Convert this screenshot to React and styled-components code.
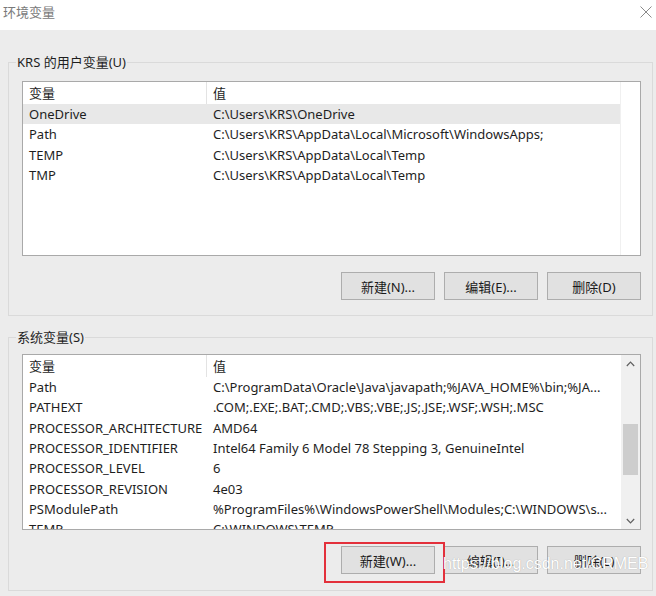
import React from "react";
import styled, { createGlobalStyle } from "styled-components";

const GlobalStyle = createGlobalStyle`
  html, body { margin: 0; padding: 0; }
  body {
    background: #ececec;
    font-family: "Noto Sans", "Noto Sans CJK SC", sans-serif;
  }
  * { box-sizing: border-box; }
`;

const Window = styled.div`
  position: relative;
  width: 656px;
  height: 596px;
  background: #ececec;
  overflow: hidden;
  display: flex;
  flex-direction: column;
`;

const TitleBar = styled.div`
  height: 30px;
  flex: none;
  background: #ffffff;
  display: flex;
  align-items: flex-start;
  justify-content: space-between;
  padding: 3px 4px 0 3px;
`;

const Title = styled.span`
  font-size: 13px;
  line-height: 18px;
  color: #7a7a7a;
`;

const CloseIcon = styled.svg`
  margin-top: 3px;
  width: 12px;
  height: 12px;
`;

const Group = styled.fieldset`
  margin: ${(p) => p.$top}px 3px 0 8px;
  border: 1px solid #dadada;
  padding: ${(p) => p.$padTop}px 11px ${(p) => p.$padBottom}px 13px;
  min-width: 0;
`;

const Legend = styled.legend`
  margin-left: -6px;
  padding: 0 1px;
  font-size: 13px;
  line-height: 18px;
  color: #1e1e1e;
`;

const List = styled.div`
  height: ${(p) => p.$height}px;
  background: #ffffff;
  border: 1px solid #a9a9a9;
  display: flex;
  overflow: hidden;
`;

const Table = styled.div`
  flex: 1;
  min-width: 0;
  display: flex;
  flex-direction: column;
`;

const Row = styled.div`
  flex: none;
  display: grid;
  grid-template-columns: 184px 1fr;
  height: ${(p) => (p.$header ? 22 : 20.33)}px;
  line-height: ${(p) => (p.$header ? 22 : 20.33)}px;
  background: ${(p) => (p.$selected ? "#e8e8e8" : "transparent")};
  font-size: 13px;
  color: #1e1e1e;
`;

const Cell = styled.div`
  padding-left: 6px;
  white-space: nowrap;
  overflow: hidden;
  border-right: ${(p) => (p.$divider ? "1px solid #e3e3e3" : "none")};
`;

const Spacer = styled.div`
  width: 20px;
  flex: none;
  border-left: 1px solid #f0f0f0;
`;

const ScrollBar = styled.div`
  width: 19px;
  flex: none;
  background: #f0f0f0;
  display: flex;
  flex-direction: column;
`;

const ArrowBtn = styled.div`
  height: 17px;
  flex: none;
  display: flex;
  align-items: center;
  justify-content: center;
`;

const Track = styled.div`
  flex: 1;
  padding: 0 2px;
`;

const Thumb = styled.div`
  margin-top: 52px;
  height: 51px;
  background: #cdcdcd;
`;

const ButtonRow = styled.div`
  display: flex;
  justify-content: flex-end;
  gap: 9px;
  margin-top: 16px;
`;

const Button = styled.button`
  width: 94px;
  height: 28px;
  padding: 0;
  background: #e1e1e1;
  border: 1px solid #adadad;
  font-family: "Noto Sans", "Noto Sans CJK SC", sans-serif;
  font-size: 13px;
  color: #1a1a1a;
`;

const Marked = styled.div`
  position: relative;
  display: flex;
`;

const Highlight = styled.div`
  position: absolute;
  left: -17px;
  top: -4px;
  right: -10px;
  bottom: -9px;
  border: 2px solid #e3303b;
  pointer-events: none;
`;

const Watermark = styled.div`
  position: absolute;
  left: 443px;
  top: 554px;
  font-family: "Liberation Sans", Arial, sans-serif;
  font-size: 16px;
  line-height: 20px;
  color: #ffffff;
  text-shadow: 0 0 1px rgba(0, 0, 0, 0.3);
  pointer-events: none;
`;

const Chevron = ({ up }) => (
  <svg width="9" height="6" viewBox="0 0 9 6">
    <path
      d={up ? "M0.8 5 L4.5 1.2 L8.2 5" : "M0.8 1 L4.5 4.8 L8.2 1"}
      fill="none"
      stroke="#606060"
      strokeWidth="1.2"
    />
  </svg>
);

const userVars = [
  ["OneDrive", "C:\\Users\\KRS\\OneDrive"],
  ["Path", "C:\\Users\\KRS\\AppData\\Local\\Microsoft\\WindowsApps;"],
  ["TEMP", "C:\\Users\\KRS\\AppData\\Local\\Temp"],
  ["TMP", "C:\\Users\\KRS\\AppData\\Local\\Temp"],
];

const sysVars = [
  ["Path", "C:\\ProgramData\\Oracle\\Java\\javapath;%JAVA_HOME%\\bin;%JA..."],
  ["PATHEXT", ".COM;.EXE;.BAT;.CMD;.VBS;.VBE;.JS;.JSE;.WSF;.WSH;.MSC"],
  ["PROCESSOR_ARCHITECTURE", "AMD64"],
  ["PROCESSOR_IDENTIFIER", "Intel64 Family 6 Model 78 Stepping 3, GenuineIntel"],
  ["PROCESSOR_LEVEL", "6"],
  ["PROCESSOR_REVISION", "4e03"],
  ["PSModulePath", "%ProgramFiles%\\WindowsPowerShell\\Modules;C:\\WINDOWS\\s..."],
  ["TEMP", "C:\\WINDOWS\\TEMP"],
  ["TMP", "C:\\WINDOWS\\TEMP"],
];

const VarTable = ({ rows, selected }) => (
  <Table>
    <Row $header>
      <Cell $divider>变量</Cell>
      <Cell>值</Cell>
    </Row>
    {rows.map(([k, v], i) => (
      <Row key={k} $selected={i === selected}>
        <Cell>{k}</Cell>
        <Cell>{v}</Cell>
      </Row>
    ))}
  </Table>
);

export default function App() {
  return (
    <>
      <GlobalStyle />
      <Window>
        <TitleBar>
          <Title>环境变量</Title>
          <CloseIcon viewBox="0 0 12 12">
            <path d="M0.5 0.5 L11.5 11.5 M11.5 0.5 L0.5 11.5" stroke="#8a8a8a" strokeWidth="1" />
          </CloseIcon>
        </TitleBar>

        <Group $top={23} $padTop={10} $padBottom={15}>
          <Legend>KRS 的用户变量(U)</Legend>
          <List $height={175}>
            <VarTable rows={userVars} selected={0} />
            <Spacer />
          </List>
          <ButtonRow>
            <Button>新建(N)...</Button>
            <Button>编辑(E)...</Button>
            <Button>删除(D)</Button>
          </ButtonRow>
        </Group>

        <Group $top={12} $padTop={8} $padBottom={16}>
          <Legend>系统变量(S)</Legend>
          <List $height={176}>
            <VarTable rows={sysVars} selected={-1} />
            <ScrollBar>
              <ArrowBtn>
                <Chevron up />
              </ArrowBtn>
              <Track>
                <Thumb />
              </Track>
              <ArrowBtn>
                <Chevron />
              </ArrowBtn>
            </ScrollBar>
          </List>
          <ButtonRow>
            <Marked>
              <Button>新建(W)...</Button>
              <Highlight />
            </Marked>
            <Button>编辑(I)...</Button>
            <Button>删除(L)</Button>
          </ButtonRow>
        </Group>

        <Watermark>https://blog.csdn.net/CRMEB</Watermark>
      </Window>
    </>
  );
}
